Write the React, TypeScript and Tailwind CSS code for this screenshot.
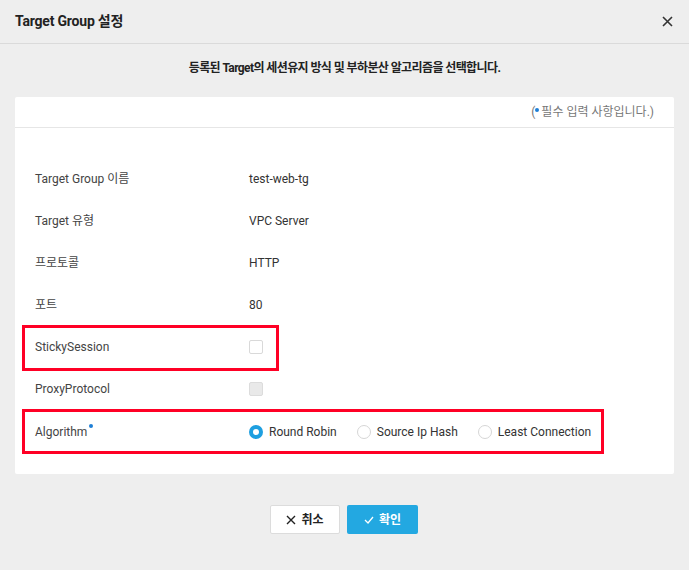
import React, { useState } from "react";

const FONT = { fontFamily: "Roboto, 'Noto Sans CJK KR', sans-serif" };

type Row = { label: string; value?: string };

const INFO_ROWS: Row[] = [
    { label: "Target Group 이름", value: "test-web-tg" },
    { label: "Target 유형", value: "VPC Server" },
    { label: "프로토콜", value: "HTTP" },
    { label: "포트", value: "80" },
];

const ALGORITHMS = ["Round Robin", "Source Ip Hash", "Least Connection"];

function Radio({ checked }: { checked: boolean }) {
    return checked ? (
        <span className="w-[14px] h-[14px] rounded-full bg-[#1e9fe0] flex items-center justify-center shrink-0">
            <span className="w-[6px] h-[6px] rounded-full bg-white" />
        </span>
    ) : (
        <span className="w-[14px] h-[14px] rounded-full border border-[#d6d6d6] bg-white shrink-0" />
    );
}

export default function App() {
    const [sticky, setSticky] = useState(false);
    const [algo, setAlgo] = useState("Round Robin");

    return (
        <div className="w-[689px] h-[570px] bg-[#eeeeee] text-[#333]" style={FONT}>
            <div className="h-[44px] border-b border-[#dadada] px-[15px] flex items-center justify-between">
                <h1 className="text-[14px] font-bold text-[#222] tracking-[-0.2px]">Target Group 설정</h1>
                <button className="w-[14px] h-[14px] flex items-center justify-center">
                    <svg width="11" height="11" viewBox="0 0 11 11">
                        <path d="M1 1 L10 10 M10 1 L1 10" stroke="#333" strokeWidth="1.6" />
                    </svg>
                </button>
            </div>

            <p className="pt-[15px] text-center text-[12px] font-bold text-[#222] leading-[18px] tracking-[-0.6px]">
                등록된 Target의 세션유지 방식 및 부하분산 알고리즘을 선택합니다.
            </p>

            <div className="mx-[15px] mt-[20px] bg-white rounded-[2px]">
                <div className="h-[31px] border-b border-[#e6e6e6] flex items-center justify-end pr-[20px] text-[12px] text-[#777]">
                    (<span className="w-[4px] h-[4px] rounded-full bg-[#1e7fd6] mb-[5px] mr-[2px]" />필수 입력 사항입니다.)
                </div>

                <div className="pt-[30px] pb-[22px]">
                    {INFO_ROWS.map((r) => (
                        <div key={r.label} className="h-[42px] px-[20px] flex items-center text-[12px]">
                            <span className="w-[214px] text-[#444]">{r.label}</span>
                            <span className="text-[#333]">{r.value}</span>
                        </div>
                    ))}

                    <div className="relative h-[42px] px-[20px] flex items-center text-[12px]">
                        <span className="w-[214px] text-[#444]">StickySession</span>
                        <button
                            onClick={() => setSticky(!sticky)}
                            className="w-[14px] h-[14px] rounded-[2px] border border-[#d9d9d9] bg-white"
                        />
                        <span className="absolute left-[7px] w-[257px] -top-[1px] -bottom-[3px] border-[3px] border-[#ff0025] pointer-events-none" />
                    </div>

                    <div className="h-[42px] px-[20px] flex items-center text-[12px]">
                        <span className="w-[214px] text-[#444]">ProxyProtocol</span>
                        <span className="w-[14px] h-[14px] rounded-[2px] border border-[#dcdcdc] bg-[#e9e9e9]" />
                    </div>

                    <div className="relative h-[42px] px-[20px] flex items-center text-[12px] pt-[2px]">
                        <span className="w-[214px] text-[#444] flex items-start">
                            Algorithm
                            <span className="w-[4px] h-[4px] rounded-full bg-[#1e7fd6] ml-[2px] mt-[1px]" />
                        </span>
                        <div className="flex items-center">
                            {ALGORITHMS.map((a, i) => (
                                <button
                                    key={a}
                                    onClick={() => setAlgo(a)}
                                    className={`flex items-center gap-[6px] ${i > 0 ? "ml-[20px]" : ""}`}
                                >
                                    <Radio checked={algo === a} />
                                    <span className="text-[#333]">{a}</span>
                                </button>
                            ))}
                        </div>
                        <span className="absolute left-[7px] w-[582px] -top-[1px] -bottom-[2px] border-[3px] border-[#ff0025] pointer-events-none" />
                    </div>
                </div>
            </div>

            <div className="mt-[31px] flex justify-center gap-[7px] pr-[1px]">
                <button className="w-[70px] h-[29px] bg-white border border-[#dcdcdc] rounded-[2px] flex items-center justify-center gap-[5px] text-[12px] font-bold text-[#222]">
                    <svg width="10" height="10" viewBox="0 0 10 10">
                        <path d="M1 1 L9 9 M9 1 L1 9" stroke="#222" strokeWidth="1.4" />
                    </svg>
                    취소
                </button>
                <button className="w-[71px] h-[29px] bg-[#23a8e1] rounded-[2px] flex items-center justify-center gap-[5px] text-[12px] font-bold text-white">
                    <svg width="10" height="8" viewBox="0 0 10 8">
                        <path d="M1 4 L4 7 L9 1" stroke="#fff" strokeWidth="1.3" fill="none" />
                    </svg>
                    확인
                </button>
            </div>
        </div>
    );
}
